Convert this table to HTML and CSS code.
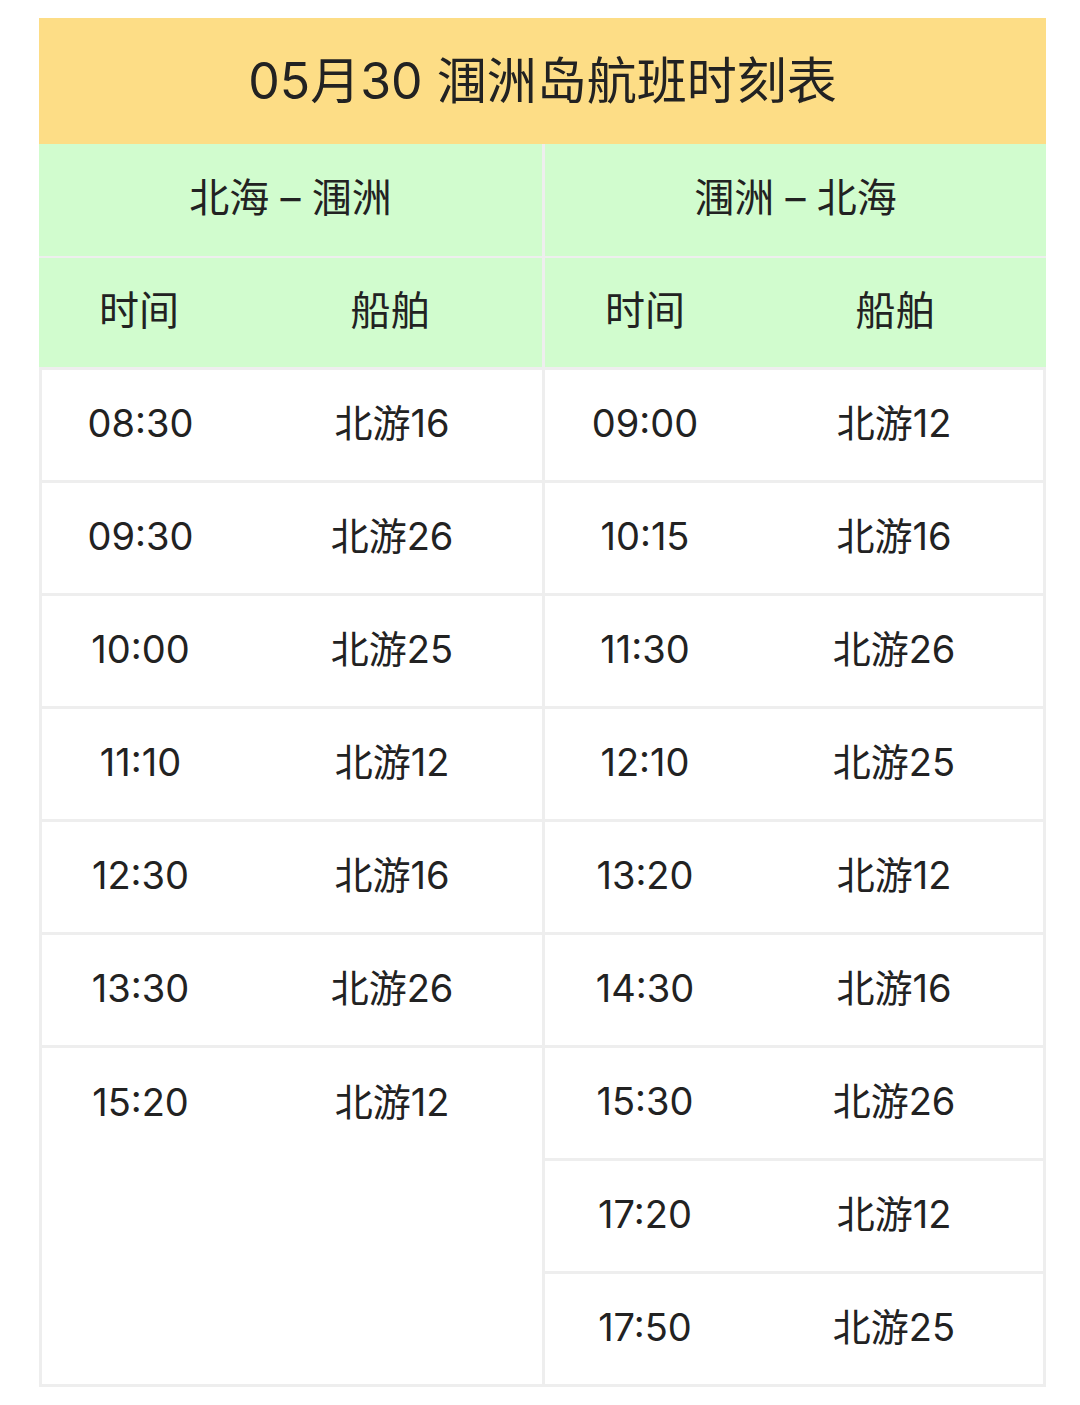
FILE: index.html
```html
<!DOCTYPE html>
<html lang="zh-CN">
<head>
<meta charset="utf-8">
<title>05月30 涠洲岛航班时刻表</title>
<link rel="stylesheet" href="styles.css">
</head>
<body>
<div class="sheet">
  <div class="title">05月30 涠洲岛航班时刻表</div>
  <div class="halves">
    <div class="half left">
      <div class="route">北海 – 涠洲</div>
      <div class="row head"><span>时间</span><span>船舶</span></div>
      <div class="row"><span>08:30</span><span>北游16</span></div>
      <div class="row"><span>09:30</span><span>北游26</span></div>
      <div class="row"><span>10:00</span><span>北游25</span></div>
      <div class="row"><span>11:10</span><span>北游12</span></div>
      <div class="row"><span>12:30</span><span>北游16</span></div>
      <div class="row"><span>13:30</span><span>北游26</span></div>
      <div class="row last"><span>15:20</span><span>北游12</span></div>
    </div>
    <div class="half right">
      <div class="route">涠洲 – 北海</div>
      <div class="row head"><span>时间</span><span>船舶</span></div>
      <div class="row"><span>09:00</span><span>北游12</span></div>
      <div class="row"><span>10:15</span><span>北游16</span></div>
      <div class="row"><span>11:30</span><span>北游26</span></div>
      <div class="row"><span>12:10</span><span>北游25</span></div>
      <div class="row"><span>13:20</span><span>北游12</span></div>
      <div class="row"><span>14:30</span><span>北游16</span></div>
      <div class="row"><span>15:30</span><span>北游26</span></div>
      <div class="row"><span>17:20</span><span>北游12</span></div>
      <div class="row"><span>17:50</span><span>北游25</span></div>
    </div>
  </div>
</div>
</body>
</html>
```
FILE: styles.css
```css
html, body {
  margin: 0;
  padding: 0;
  background: #ffffff;
}
body {
  font-family: Inter, "Noto Sans CJK SC", sans-serif;
  color: #222222;
}
.sheet {
  width: 1007px;
  margin: 18px 0 0 39px;
}
.title {
  height: 126px;
  background: #fddd86;
  display: flex;
  align-items: center;
  justify-content: center;
  font-size: 50px;
  line-height: 1;
}
.halves {
  display: grid;
  grid-template-columns: 503px 501px;
  column-gap: 3px;
  background: #eeeeee;
  border-bottom: 3px solid #eeeeee;
}
.half {
  display: flex;
  flex-direction: column;
  background: #ffffff;
}
.route {
  height: 112px;
  box-sizing: border-box;
  padding-bottom: 4px;
  background: #d1fcce;
  display: flex;
  align-items: center;
  justify-content: center;
  font-size: 40px;
  line-height: 1;
}
.row {
  display: grid;
  grid-template-columns: 200px 1fr;
  align-items: center;
  height: 110px;
  box-sizing: content-box;
  border-top: 3px solid #eeeeee;
  font-size: 38px;
  line-height: 1;
}
.row span {
  text-align: center;
  padding-bottom: 4px;
}
.row.head {
  height: 109px;
  background: #d1fcce;
  border-top-width: 2px;
  font-size: 40px;
}
.left .row:not(.head) {
  border-left: 3px solid #eeeeee;
}
.left .row:not(.head) span:first-child {
  margin-left: -3px;
}
.right .row:not(.head) {
  border-right: 3px solid #eeeeee;
}
.row.last {
  flex: 1;
  align-items: start;
  padding-top: 35px;
}
```
